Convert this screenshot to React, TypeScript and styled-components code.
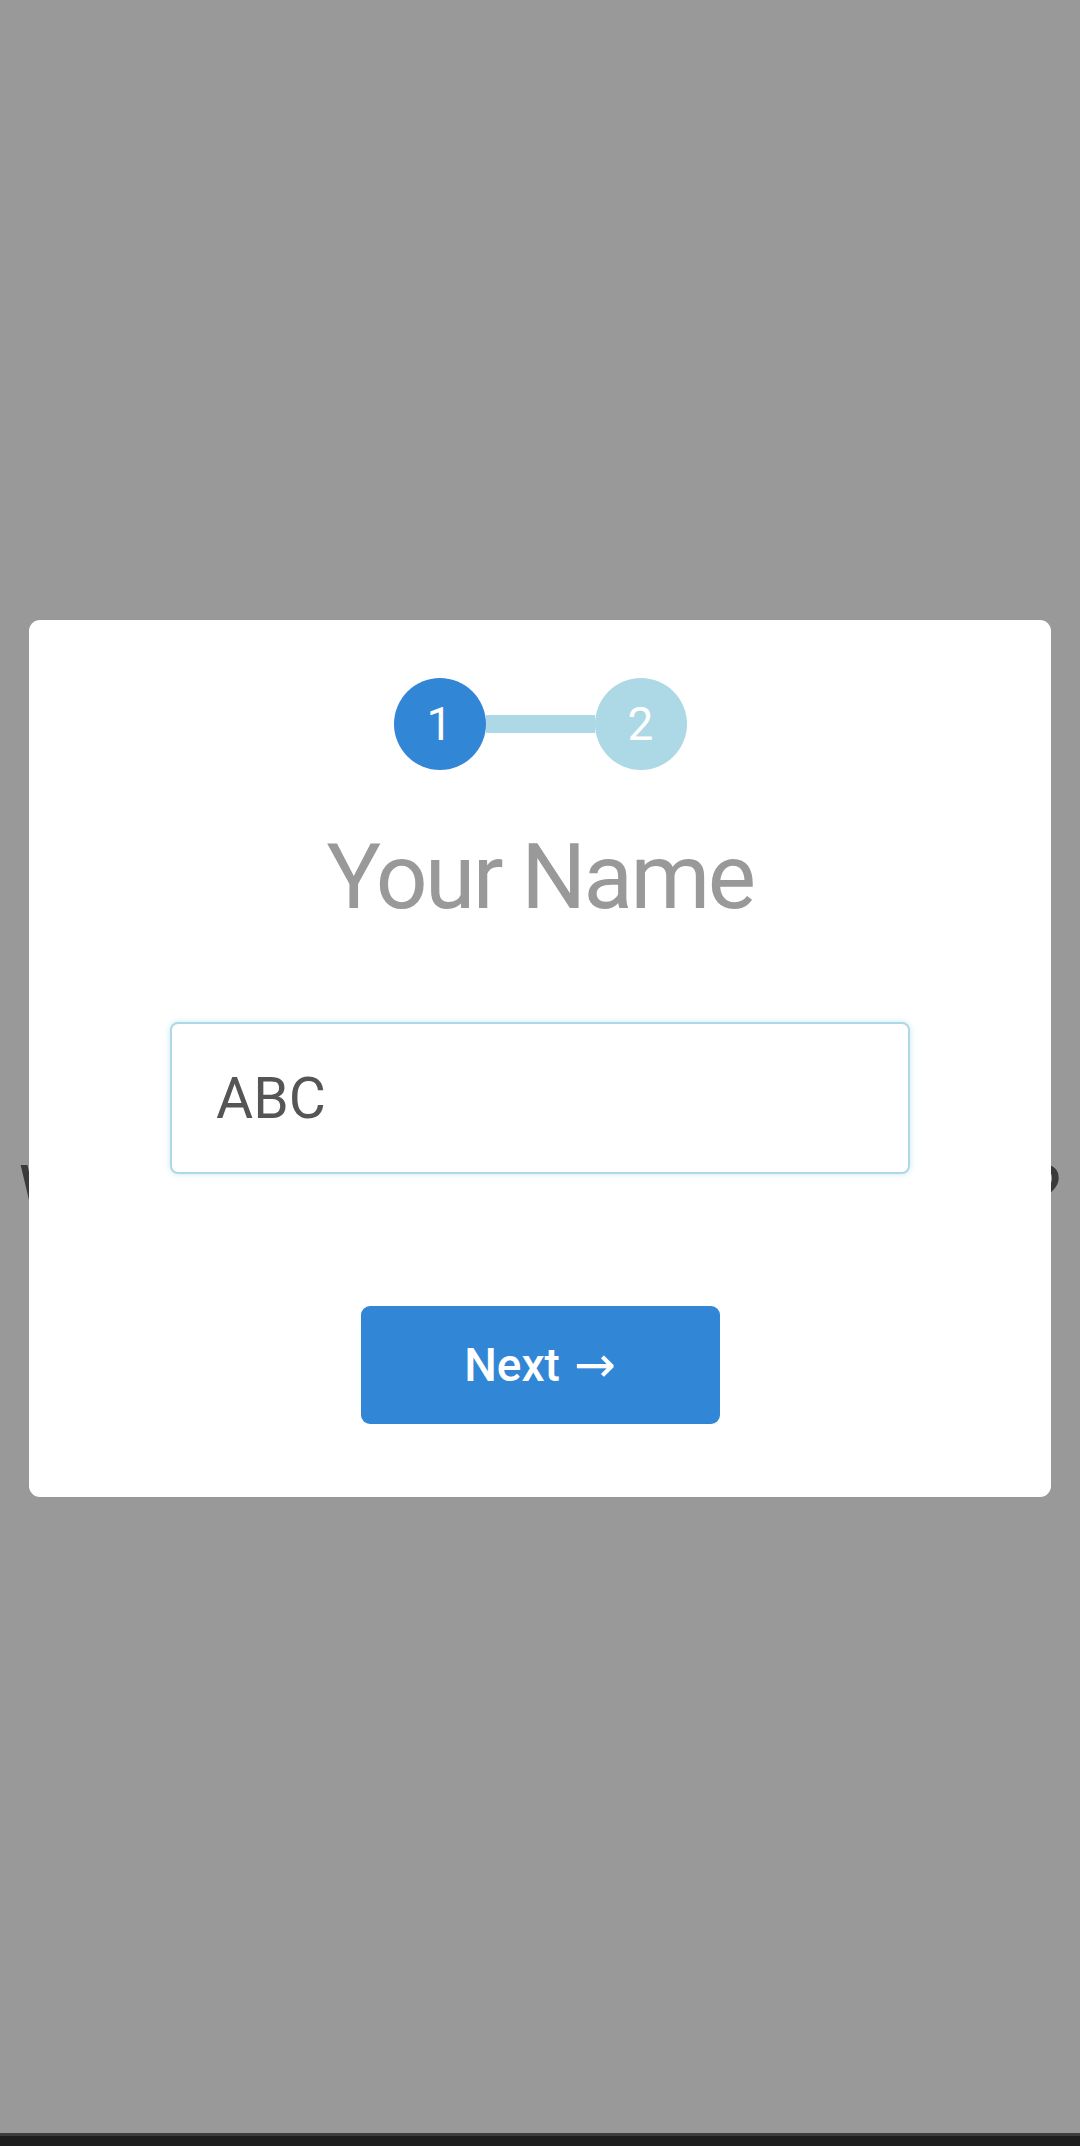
import React from "react";
import styled, { createGlobalStyle } from "styled-components";

const GlobalStyle = createGlobalStyle`
  html, body {
    margin: 0;
    padding: 0;
    background: #ffffff;
    font-family: Roboto, "Noto Sans", "Liberation Sans", sans-serif;
  }
  * { box-sizing: border-box; }
`;

const Page = styled.div`
  width: 1080px;
  height: 2146px;
  display: flex;
  flex-direction: column;
  overflow: hidden;
`;

const Stage = styled.main`
  position: relative;
  flex: 1;
  background: #ffffff;
  padding-top: 1157px;
`;

const Question = styled.h1`
  margin: 0;
  font-size: 72px;
  line-height: 72px;
  font-weight: 400;
  color: #616161;
  text-align: center;
  white-space: nowrap;
`;

const Overlay = styled.div`
  position: absolute;
  inset: 0;
  background: rgba(0, 0, 0, 0.4);
  display: flex;
  align-items: flex-start;
  justify-content: center;
  padding: 620px 29px 0;
`;

const Modal = styled.section`
  width: 100%;
  background: #ffffff;
  border-radius: 11px;
  padding: 58px 0 73px;
  display: flex;
  flex-direction: column;
  align-items: center;
`;

const Stepper = styled.div`
  display: flex;
  align-items: center;
`;

const StepCircle = styled.div<{ $active?: boolean }>`
  width: 92px;
  height: 92px;
  border-radius: 50%;
  background: ${(p) => (p.$active ? "#3286d6" : "#add8e6")};
  color: #ffffff;
  display: flex;
  align-items: center;
  justify-content: center;
  font-size: 46px;
  font-weight: 400;
`;

const StepLine = styled.div`
  width: 109px;
  height: 18px;
  background: #add8e6;
`;

const Title = styled.h2`
  margin: 62px 0 0;
  font-size: 91px;
  line-height: 91px;
  font-weight: 400;
  color: #999999;
  letter-spacing: -2.5px;
`;

const NameInput = styled.input`
  margin-top: 99px;
  width: 740px;
  height: 152px;
  border: 2px solid #add8e6;
  border-radius: 8px;
  box-shadow: 0 0 6px rgba(173, 216, 230, 0.6);
  padding: 0 44px;
  font-family: Roboto, "Noto Sans", sans-serif;
  font-size: 57px;
  color: #555555;
  background: #ffffff;
  outline: none;
`;

const NextButton = styled.button`
  margin-top: 132px;
  width: 359px;
  height: 118px;
  border: none;
  border-radius: 9px;
  background: #3286d6;
  color: #ffffff;
  font-family: Roboto, "Noto Sans", sans-serif;
  font-size: 46px;
  font-weight: 500;
  cursor: pointer;
  display: flex;
  align-items: center;
  justify-content: center;
  gap: 14px;
`;

const Arrow = styled.span`
  font-weight: 400;
  font-family: "DejaVu Sans", sans-serif;
  font-size: 50px;
  line-height: 1;
`;

const BottomBar = styled.footer`
  height: 13px;
  background: #1e1e1e;
  border-top: 3px solid #3d3d3d;
`;

export default function App() {
  return (
    <>
      <GlobalStyle />
      <Page>
        <Stage>
          <Question>What is your first and last name?</Question>
          <Overlay>
            <Modal>
              <Stepper>
                <StepCircle $active>1</StepCircle>
                <StepLine />
                <StepCircle>2</StepCircle>
              </Stepper>
              <Title>Your Name</Title>
              <NameInput defaultValue="ABC" />
              <NextButton>
                Next <Arrow>→</Arrow>
              </NextButton>
            </Modal>
          </Overlay>
        </Stage>
        <BottomBar />
      </Page>
    </>
  );
}
